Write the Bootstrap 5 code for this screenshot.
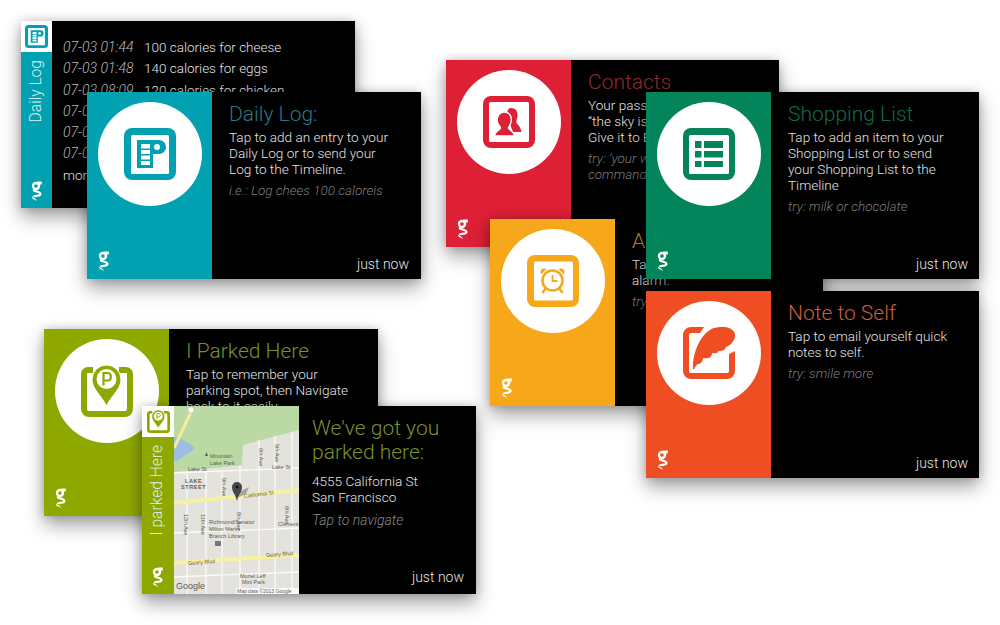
<!DOCTYPE html>
<html lang="en">
<head>
    <meta charset="UTF-8">
    <title>Glass cards</title>
    <link href="https://cdn.jsdelivr.net/npm/bootstrap@5.3.0/dist/css/bootstrap.min.css" rel="stylesheet">
    <style>
        body { background: #fff; font-family: Roboto, "Liberation Sans", sans-serif; font-weight: 300; }
        .canvas { position: relative; width: 1000px; height: 625px; overflow: hidden; }
        .glass { position: absolute; width: 334px; height: 187px; background: #000; color: #e4e4e4; box-shadow: 0 9px 18px rgba(0,0,0,.36), 0 0 9px rgba(0,0,0,.18); }
        .glass-a { left: 21px; top: 21px; }
        .glass-b { left: 87px; top: 92px; }
        .glass-c { left: 446px; top: 60px; width: 333px; }
        .glass-d { left: 490px; top: 219px; width: 333px; }
        .glass-e { left: 646px; top: 92px; width: 333px; }
        .glass-f { left: 646px; top: 291px; width: 333px; }
        .glass-g { left: 44px; top: 329px; }
        .glass-h { left: 142px; top: 406px; height: 188px; }
        .glass-e .body-pane, .glass-f .body-pane { padding-right: 11px; }
        .glass-h .side-thin { width: 32px; }
        .tone-teal { --tone: #02a1b2; --title: #2b7885; }
        .tone-red { --tone: #dd2035; --title: #8e2a36; }
        .tone-amber { --tone: #f6a81a; --title: #b98a2b; }
        .tone-green { --tone: #03845a; --title: #146a47; }
        .tone-orange { --tone: #ef4e23; --title: #cc5c40; }
        .tone-olive { --tone: #8fa800; --title: #7b9128; }
        .side-wide { width: 125px; flex: none; background: var(--tone); padding: 10px 0 8px 11px; }
        .side-thin { width: 31px; flex: none; background: var(--tone); }
        .disc { width: 104px; height: 104px; background: #fff; border-radius: 50%; color: var(--tone); }
        .disc svg { width: 52px; height: 52px; }
        .logo { width: 11px; height: 20px; color: #fff; display: block; }
        .thumb { height: 31px; background: #fff; color: var(--tone); }
        .thumb svg { width: 23px; height: 23px; }
        .side-label { writing-mode: vertical-rl; transform: rotate(180deg); font-size: 15.6px; color: #d8f2f4; line-height: 1; margin: 8px auto auto; }
        .side-thin .logo { margin: 0 0 7px 10px; }
        .body-pane { padding: 9px 12px 7px 17px; line-height: 16px; font-size: 13.6px; min-width: 0; white-space: nowrap; }
        .pane-title { color: var(--title); font-size: 21px; line-height: 26px; margin-bottom: 2px; }
        .pane-hint { font-style: italic; font-size: 13.5px; color: #7d7d7d; margin-top: 5px; }
        .pane-time { font-size: 14px; color: #e4e4e4; text-align: right; }
        .log-pane { padding: 16px 0 0 11px; font-size: 13.5px; line-height: 21.3px; white-space: nowrap; }
        .log-time { font-style: italic; font-size: 14px; color: #bdbdbd; display: inline-block; width: 81px; }
        .map-pane { width: 125px; flex: none; display: block; font-family: "Liberation Sans", sans-serif; }
        .map-pane text { font-size: 5.5px; fill: #5c5c54; font-weight: 400; }
        .park-pane { padding-left: 13px; padding-bottom: 9px; }
        .park-title { line-height: 24px; margin-bottom: 9px; margin-top: 1px; }
        .park-hint { font-size: 14px; margin-top: 7px; color: #8a8a8a; }
    </style>
</head>
<body>
<svg width="0" height="0" class="position-absolute">
    <defs>
        <symbol id="logo-g" viewBox="0 0 11 20">
            <circle cx="5" cy="5" r="3" fill="none" stroke="currentColor" stroke-width="2.400"/>
            <path d="M6 .6H10.800V3.400H7.500Z" fill="currentColor"/>
            <path d="M3.500 8.200C.5 11 9.500 9.800 9.500 13C9.500 15.600 3.200 14.300 2.600 15.900" fill="none" stroke="currentColor" stroke-width="2.200"/>
            <path d="M1.600 15.600C2 17.400 5 17 6 20C4.800 18.600 2 18.600 1 17Z" fill="currentColor"/>
        </symbol>
        <symbol id="ico-log" viewBox="0 0 52 52">
            <rect width="52" height="52" rx="8" fill="currentColor"/>
            <rect x="7" y="7" width="38" height="39" rx="1.5" fill="#fff"/>
            <path d="M13 12H35A7 7 0 0 1 35 26H29V40H13Z" fill="currentColor"/>
            <rect x="17" y="16" width="9" height="4.500" fill="#fff"/>
            <rect x="17" y="22" width="9" height="4" fill="#fff"/>
            <rect x="17" y="27.500" width="9" height="4" fill="#fff"/>
            <rect x="17" y="33" width="9" height="4" fill="#fff"/>
            <circle cx="33" cy="19" r="3" fill="#fff"/>
        </symbol>
        <symbol id="ico-contacts" viewBox="0 0 52 52">
            <rect width="52" height="52" rx="8" fill="currentColor"/>
            <rect x="6" y="6" width="40" height="40" rx="1.5" fill="#fff"/>
            <path d="M28 12C33 12 35 16 34.500 20C34 23 33 25 33.500 27C35.500 29 38 32 38.500 36H30L24 20C24 15 25 12 28 12Z" fill="currentColor"/>
            <path d="M21 16C27 16 29 21 28 26C27.500 29 26 30 25.500 32C26 34 31 35 32 40H11C12 35 17 34 17.500 32C17 30 15 29 14.500 26C13.500 21 16 16 21 16Z" fill="currentColor" stroke="#fff" stroke-width="1.400"/>
        </symbol>
        <symbol id="ico-alarm" viewBox="0 0 52 52">
            <rect width="52" height="52" rx="8" fill="currentColor"/>
            <rect x="7" y="6.500" width="39" height="39" rx="1.5" fill="#fff"/>
            <circle cx="25.500" cy="25.500" r="10" fill="none" stroke="currentColor" stroke-width="2.600"/>
            <path d="M25.500 20V26H30.500" fill="none" stroke="currentColor" stroke-width="1.800"/>
            <path d="M13.500 17.500C13 14 17 12.500 19.500 14L14.200 19.500ZM37.500 17.500C38 14 34 12.500 31.500 14L36.800 19.500Z" fill="currentColor"/>
            <path d="M18.500 33.500L15.500 38M32.500 33.500L35.500 38" stroke="currentColor" stroke-width="2.400"/>
        </symbol>
        <symbol id="ico-list" viewBox="0 0 52 52">
            <rect width="52" height="52" rx="8" fill="currentColor"/>
            <rect x="6" y="7" width="40" height="39" rx="1.500" fill="#fff"/>
            <g fill="currentColor">
                <rect x="12" y="13" width="6.500" height="7"/><rect x="21" y="13" width="19" height="7"/>
                <rect x="12" y="23" width="6.500" height="6.500"/><rect x="21" y="23" width="19" height="6.500"/>
                <rect x="12" y="33" width="6.500" height="6"/><rect x="21" y="33" width="19" height="6"/>
            </g>
        </symbol>
        <symbol id="ico-note" viewBox="0 0 52 52">
            <path d="M21 0H8A8 8 0 0 0 0 8V44A8 8 0 0 0 8 52H44A8 8 0 0 0 52 44V24L46 27V44A2 2 0 0 1 44 46H8A2 2 0 0 1 6 44V8A2 2 0 0 1 8 6H17Z" fill="currentColor"/>
            <path d="M10 42C9 30 16 6 31 1C38 -1 50 -1 52 7C53 13 47 19 43 20C42 24 38 24 35 24C35 27 32 26 29 26C29 31 24 32 20 31C20 35 17 37 15 37C13 38 12 40 11.500 42Z" fill="currentColor"/>
        </symbol>
        <symbol id="ico-park" viewBox="0 0 52 52">
            <path d="M12 2H7A7 7 0 0 0 0 9V44A8 8 0 0 0 8 52H44A8 8 0 0 0 52 44V9A7 7 0 0 0 45 2H38V8H45A1 1 0 0 1 46 9V44A2 2 0 0 1 44 46H8A2 2 0 0 1 6 44V9A1 1 0 0 1 7 8H12Z" fill="currentColor"/>
            <path d="M25.500 0A14.500 14.500 0 0 1 40 14.500C40 24 31 30 25.500 41C20 30 11 24 11 14.500A14.500 14.500 0 0 1 25.500 0Z" fill="currentColor" stroke="#fff" stroke-width="1"/>
            <circle cx="25.500" cy="14" r="10" fill="#fff"/>
            <path d="M22.500 20.500V8H26.500C31 8 31 15.500 26.500 15.500H22.500" fill="none" stroke="currentColor" stroke-width="2.200"/>
        </symbol>
    </defs>
</svg>

<div class="canvas">

    <div class="glass glass-a tone-teal d-flex">
        <div class="side-thin d-flex flex-column">
            <div class="thumb d-flex align-items-center justify-content-center"><svg><use href="#ico-log"/></svg></div>
            <div class="side-label">Daily Log</div>
            <svg class="logo"><use href="#logo-g"/></svg>
        </div>
        <div class="log-pane">
            <div><span class="log-time">07-03 01:44</span>100 calories for cheese</div>
            <div><span class="log-time">07-03 01:48</span>140 calories for eggs</div>
            <div><span class="log-time">07-03 08:09</span>120 calories for chicken</div>
            <div><span class="log-time">07-03 08:30</span></div>
            <div><span class="log-time">07-03 09:12</span></div>
            <div><span class="log-time">07-03 10:02</span></div>
            <div>more</div>
        </div>
    </div>

    <div class="glass glass-b tone-teal d-flex">
        <div class="side-wide d-flex flex-column justify-content-between">
            <div class="disc d-flex align-items-center justify-content-center"><svg><use href="#ico-log"/></svg></div>
            <svg class="logo"><use href="#logo-g"/></svg>
        </div>
        <div class="body-pane flex-grow-1 d-flex flex-column">
            <div class="pane-title">Daily Log:</div>
            <div>Tap to add an entry to your<br>Daily Log or to send your<br>Log to the Timeline.</div>
            <div class="pane-hint">i.e.: Log chees 100 caloreis</div>
            <div class="pane-time mt-auto">just now</div>
        </div>
    </div>

    <div class="glass glass-c tone-red d-flex">
        <div class="side-wide d-flex flex-column justify-content-between">
            <div class="disc d-flex align-items-center justify-content-center"><svg><use href="#ico-contacts"/></svg></div>
            <svg class="logo"><use href="#logo-g"/></svg>
        </div>
        <div class="body-pane flex-grow-1">
            <div class="pane-title">Contacts</div>
            <div>Your passphrase is<br>“the sky is blue”.<br>Give it to Ed</div>
            <div class="pane-hint">try: ‘your word’<br>command</div>
        </div>
    </div>

    <div class="glass glass-d tone-amber d-flex">
        <div class="side-wide d-flex flex-column justify-content-between">
            <div class="disc d-flex align-items-center justify-content-center"><svg><use href="#ico-alarm"/></svg></div>
            <svg class="logo"><use href="#logo-g"/></svg>
        </div>
        <div class="body-pane flex-grow-1">
            <div class="pane-title">Alarm</div>
            <div>Tap to set an<br>alarm.</div>
            <div class="pane-hint">try: 7 am</div>
        </div>
    </div>

    <div class="glass glass-e tone-green d-flex">
        <div class="side-wide d-flex flex-column justify-content-between">
            <div class="disc d-flex align-items-center justify-content-center"><svg><use href="#ico-list"/></svg></div>
            <svg class="logo"><use href="#logo-g"/></svg>
        </div>
        <div class="body-pane flex-grow-1 d-flex flex-column">
            <div class="pane-title">Shopping List</div>
            <div>Tap to add an item to your<br>Shopping List or to send<br>your Shopping List to the<br>Timeline</div>
            <div class="pane-hint">try: milk or chocolate</div>
            <div class="pane-time mt-auto">just now</div>
        </div>
    </div>

    <div class="glass glass-f tone-orange d-flex">
        <div class="side-wide d-flex flex-column justify-content-between">
            <div class="disc d-flex align-items-center justify-content-center"><svg><use href="#ico-note"/></svg></div>
            <svg class="logo"><use href="#logo-g"/></svg>
        </div>
        <div class="body-pane flex-grow-1 d-flex flex-column">
            <div class="pane-title">Note to Self</div>
            <div>Tap to email yourself quick<br>notes to self.</div>
            <div class="pane-hint">try: smile more</div>
            <div class="pane-time mt-auto">just now</div>
        </div>
    </div>

    <div class="glass glass-g tone-olive d-flex">
        <div class="side-wide d-flex flex-column justify-content-between">
            <div class="disc d-flex align-items-center justify-content-center"><svg><use href="#ico-park"/></svg></div>
            <svg class="logo"><use href="#logo-g"/></svg>
        </div>
        <div class="body-pane flex-grow-1">
            <div class="pane-title">I Parked Here</div>
            <div>Tap to remember your<br>parking spot, then Navigate<br>back to it easily</div>
        </div>
    </div>

    <div class="glass glass-h tone-olive d-flex">
        <div class="side-thin d-flex flex-column">
            <div class="thumb d-flex align-items-center justify-content-center"><svg><use href="#ico-park"/></svg></div>
            <div class="side-label">I parked Here</div>
            <svg class="logo"><use href="#logo-g"/></svg>
        </div>
        <svg class="map-pane" viewBox="0 0 125 188" width="125" height="188">
            <rect width="125" height="188" fill="#e4e2dc"/>
            <path d="M0 0H125V24L69 39L68 59L0 66Z" fill="#bbdaa3"/>
            <path d="M0 31C8 32 16 38 21 42C16 48 8 50 4 55H0Z" fill="#9fbde0"/>
            <g stroke="#fbfbf8" stroke-width="1.300" fill="none">
                <path d="M0 67L125 62M0 127L125 122M0 171L125 166"/>
                <path d="M13 66V188M32 65V188M48 64V188M66 60V188M85 34V188M101 30V188M118 26V188"/>
            </g>
            <path d="M0 42L18 4" stroke="#f2ee9b" stroke-width="3"/>
            <circle cx="17" cy="4" r="3.200" fill="#fff" stroke="#aaa" stroke-width=".6"/>
            <path d="M0 97L125 84M0 157L125 149" stroke="#f5f2a0" stroke-width="4"/>
            <path d="M31 50h3l-1.500-4Z" fill="#4a6b45"/>
            <text x="31" y="52" dx="5">Mountain</text>
            <text x="31" y="59" dx="5">Lake Park</text>
            <text x="14" y="65">Lake St</text>
            <text x="98" y="63">Lake St</text>
            <text x="11" y="77" style="font-weight:700;letter-spacing:.6px">LAKE</text>
            <text x="7" y="83" style="font-weight:700;letter-spacing:.6px">STREET</text>
            <text x="70" y="92" transform="rotate(-7 70 92)" fill="#444">California St</text>
            <text x="35" y="118">Richmond/Senator</text>
            <text x="35" y="125">Milton Marks</text>
            <text x="35" y="132">Branch Library</text>
            <rect x="41" y="135" width="6" height="5" fill="#777"/>
            <text x="104" y="120">Clement</text>
            <text x="14" y="159" transform="rotate(-4 14 159)">Geary Blvd</text>
            <text x="92" y="151" transform="rotate(-4 92 151)">Geary Blvd</text>
            <text x="84" y="42" transform="rotate(90 84 42)" dy="-1">6th Ave</text>
            <text x="100" y="38" transform="rotate(90 100 38)" dy="-1">5th Ave</text>
            <text x="9" y="108" transform="rotate(90 9 108)" dy="-1">12th Ave</text>
            <text x="26" y="108" transform="rotate(90 26 108)" dy="-1">11th Ave</text>
            <text x="47" y="72" transform="rotate(90 47 72)" dy="-1">9th Ave</text>
            <text x="62" y="106" transform="rotate(90 62 106)" dy="-1">8th Ave</text>
            <text x="110" y="100" transform="rotate(90 110 100)" dy="-1">6th Ave</text>
            <text x="66" y="172">Muriel Leff</text>
            <text x="68" y="178">Mini Park</text>
            <text x="2" y="183" style="font-size:9px" fill="#8a8a8a">Google</text>
            <rect x="62" y="182" width="63" height="6" fill="#fff" opacity=".8"/>
            <text x="63" y="187" fill="#333" style="font-size:5px">Map data ©2013 Google</text>
            <path d="M63 87L75 81L72 88L65 91Z" fill="#8a8a8a" opacity=".7"/>
            <path d="M63 95C61 87 58 86 58 81A5 5 0 0 1 68 81C68 86 65 87 63 95Z" fill="#45474a"/>
            <circle cx="63" cy="81" r="1.500" fill="#111"/>
        </svg>
        <div class="body-pane park-pane flex-grow-1 d-flex flex-column">
            <div class="pane-title park-title">We've got you<br>parked here:</div>
            <div>4555 California St<br>San Francisco</div>
            <div class="pane-hint park-hint">Tap to navigate</div>
            <div class="pane-time mt-auto">just now</div>
        </div>
    </div>

</div>
<script src="https://cdn.jsdelivr.net/npm/bootstrap@5.3.0/dist/js/bootstrap.bundle.min.js"></script>
</body>
</html>
